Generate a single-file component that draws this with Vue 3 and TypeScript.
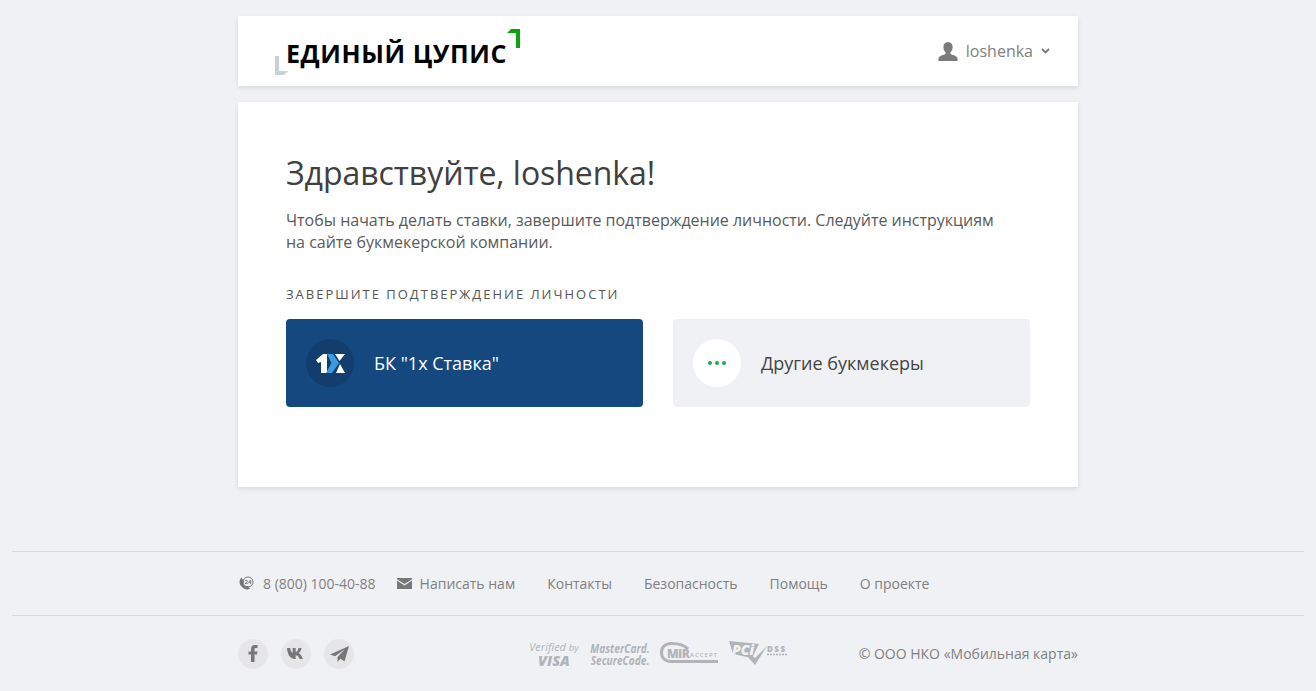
<template>
  <div class="page">
    <header class="topbar wrap">
      <a class="logo">
        <svg class="logo-corner grey" width="14" height="19" viewBox="0 0 14 19"><path d="M0 0h4v15h9l-4 4H0z" fill="#c5d2d6" /></svg>
        <span class="logo-text">ЕДИНЫЙ ЦУПИС</span>
        <svg class="logo-corner green" width="13" height="19" viewBox="0 0 13 19"><path d="M4 0h9v19H9V4H0z" fill="#0ca30c" /></svg>
      </a>
      <div class="user">
        <svg width="20" height="19" viewBox="0 0 20 19"><path d="M10 0c3 0 4.600 2.200 4.600 5 0 2.300-.9 4.300-2.100 5.300v1.700c1.500.8 6.500 1.900 7 4.200.1.800.1 1.800.1 2.800H.4c0-1 0-2 .1-2.800.5-2.300 5.500-3.400 7-4.200v-1.700C6.300 9.300 5.400 7.300 5.400 5 5.400 2.200 7 0 10 0z" fill="#7b7b7b" /></svg>
        <span>loshenka</span>
        <svg width="9" height="6" viewBox="0 0 9 6"><path d="M1 1l3.500 3.500L8 1" fill="none" stroke="#777" stroke-width="1.800" /></svg>
      </div>
    </header>

    <main class="card wrap">
      <h1>Здравствуйте, loshenka!</h1>
      <p>Чтобы начать делать ставки, завершите подтверждение личности. Следуйте инструкциям<br />на сайте букмекерской компании.</p>
      <div class="label">Завершите подтверждение личности</div>
      <div class="choices">
        <a class="choice blue">
          <span class="disc navy">
            <svg class="onex" width="29" height="19" viewBox="0 0 29 19">
              <path d="M0 6l7-6h4v19H5V8L2 9z" fill="#fff" />
              <path d="M19 0h10l-5.500 7z" fill="#fff" />
              <path d="M24 10l5 9h-9z" fill="#fff" />
              <path d="M11 0h6l6 9-7 10h-6l5.500-10z" fill="#3a9be0" />
            </svg>
          </span>
          <span>БК "1х Ставка"</span>
        </a>
        <a class="choice grey">
          <span class="disc white">
            <i></i><i></i><i></i>
          </span>
          <span>Другие букмекеры</span>
        </a>
      </div>
    </main>

    <footer class="footer">
      <div class="footer-row links">
        <div class="wrap link-list">
          <a class="with-icon">
            <svg width="16" height="15" viewBox="0 0 16 15">
              <path d="M3.500 1.500C1 4 .8 7.500 3.500 10.500s6 4 8.500 2l-2.200-2.600-1.500.9C7 10.300 5.400 8.500 5 7l1.200-1.300z" fill="#777" />
              <circle cx="10" cy="6" r="5" fill="none" stroke="#777" stroke-width="1" />
              <text x="10" y="8" class="tiny">24</text>
            </svg>
            8 (800) 100-40-88
          </a>
          <a class="with-icon mail">
            <svg width="15" height="11" viewBox="0 0 15 11">
              <path d="M0 1.200V0h15v1.200L7.500 6z" fill="#777" />
              <path d="M0 2.600L7.500 7.400 15 2.600V11H0z" fill="#777" />
            </svg>
            Написать нам
          </a>
          <a>Контакты</a>
          <a>Безопасность</a>
          <a>Помощь</a>
          <a>О проекте</a>
        </div>
      </div>
      <div class="footer-row bottom">
        <div class="wrap bottom-inner">
          <div class="socials">
            <span class="social">
              <svg width="10" height="17" viewBox="0 0 10 17"><path d="M3 17V9.500H.5v-3H3V4.300C3 1.500 4.700 0 7 0h2.500v3H8C6.800 3 6.500 3.500 6.500 4.500v2h3l-.5 3H6.500V17z" fill="#777" /></svg>
            </span>
            <span class="social">
              <svg width="18" height="11" viewBox="0 0 18 11"><path d="M0 0h3.200c.3 2.500 1.300 4.500 2.500 5V0h3v4.300c1.200-.3 2.300-2 2.900-4.300h3c-.5 2.500-1.800 4.200-3 5 1.400.7 3.100 2.500 4.400 6h-3.300c-.8-2.200-2.300-3.500-4-3.700V11H8C3.500 11 .5 7 0 0z" fill="#777" /></svg>
            </span>
            <span class="social">
              <svg width="19" height="16" viewBox="0 0 19 16"><path d="M19 0L0 8.500l5 1.700L15 3 7.500 11v5l3-3.300 4 2.800z" fill="#777" /></svg>
            </span>
          </div>
          <div class="badges">
            <div class="badge visa"><em>Verified <small>by</small></em><b>VISA</b></div>
            <div class="badge mc"><em>MasterCard. SecureCode.</em></div>
            <svg class="badge-svg" width="60" height="24" viewBox="0 0 60 24">
              <path d="M28 7C24 2.500 18 1.500 11.500 1.500 5 1.500 1.500 5.500 1.500 10.500S5 19.500 11.500 19.500H58" fill="none" stroke="#b0b3b8" stroke-width="3" />
              <text x="7" y="16" class="mir-text">MIR</text>
              <text x="30" y="15" class="accept-text">ACCEPT</text>
            </svg>
            <svg class="badge-svg pci" width="60" height="25" viewBox="0 0 60 25">
              <path d="M1 0l30 3-7 14-19-4z" fill="#b0b3b8" />
              <path d="M19 15l8 9L39 5 27 17l-4-3z" fill="#b0b3b8" />
              <text x="4" y="14" class="pci-text">PCi</text>
              <text x="39" y="11" class="dss-text">DSS</text>
              <path d="M39 13.500h20" stroke="#b0b3b8" stroke-width="1.500" stroke-dasharray="2 1" />
            </svg>
          </div>
          <div class="copy">© ООО НКО «Мобильная карта»</div>
        </div>
      </div>
    </footer>
  </div>
</template>

<script setup lang="ts">
</script>

<style>
html,
body {
  margin: 0;
  background: #f0f1f5;
}
</style>

<style scoped>
.page {
  min-height: 691px;
  padding-top: 16px;
  box-sizing: border-box;
  font-family: "Open Sans", "Noto Sans", sans-serif;
  color: #333;
}

.wrap {
  width: 840px;
  margin: 0 auto;
  box-sizing: border-box;
}

.topbar {
  height: 70px;
  background: #fff;
  box-shadow: 0 2px 5px rgba(0, 0, 0, 0.1);
  display: flex;
  align-items: center;
  justify-content: space-between;
  padding: 0 28px 0 37px;
}

.logo {
  display: flex;
  position: relative;
  align-items: center;
  padding-left: 11px;
}

.logo-text {
  font-size: 25px;
  font-weight: 700;
  line-height: 34px;
  color: #000;
  letter-spacing: 0.6px;
  margin-top: 3px;
}

.logo-corner {
  position: absolute;
}

.logo-corner.grey {
  left: 0;
  top: 23px;
}

.logo-corner.green {
  right: -13px;
  top: -4px;
}

.user {
  display: flex;
  align-items: center;
  gap: 8px;
  font-size: 16px;
  color: #808080;
}

.card {
  margin-top: 16px;
  height: 385px;
  background: #fff;
  box-shadow: 0 2px 5px rgba(0, 0, 0, 0.1);
  padding: 48px;
}

h1 {
  margin: 0;
  padding-top: 1px;
  font-size: 32px;
  font-weight: 400;
  line-height: 44px;
  letter-spacing: -0.05px;
  color: #404040;
}

p {
  margin: 14px 0 0;
  font-size: 16px;
  line-height: 22px;
  letter-spacing: -0.012px;
  color: #5a5a5a;
}

.label {
  margin-top: 32px;
  font-size: 13px;
  line-height: 18px;
  letter-spacing: 2px;
  text-transform: uppercase;
  color: #555;
}

.choices {
  display: flex;
  gap: 30px;
  margin-top: 16px;
}

.choice {
  width: 357px;
  height: 88px;
  border-radius: 4px;
  display: flex;
  align-items: center;
  gap: 20px;
  padding: 0 20px;
  box-sizing: border-box;
  font-size: 18px;
}

.choice.blue {
  background: #15487f;
  color: #fff;
}

.choice.grey {
  background: #f0f1f5;
  color: #444;
}

.disc {
  width: 48px;
  height: 48px;
  border-radius: 50%;
  display: flex;
  align-items: center;
  justify-content: center;
  flex: none;
  gap: 3px;
}

.disc.navy {
  background: #123d6d;
}

.disc.white {
  background: #fff;
}

.disc i {
  width: 4px;
  height: 4px;
  border-radius: 50%;
  background: #22a84a;
}

.footer {
  margin-top: 64px;
}

.footer-row {
  margin: 0 12px;
  border-top: 1px solid #d9dadd;
}

.links {
  height: 63px;
}

.link-list {
  display: flex;
  align-items: center;
  height: 100%;
  gap: 32px;
  font-size: 14px;
  color: #808080;
}

.with-icon {
  display: flex;
  align-items: center;
  gap: 9px;
}

.mail {
  margin-left: -11px;
  gap: 8px;
}

.tiny {
  font-size: 6px;
  font-weight: 700;
  text-anchor: middle;
  fill: #777;
}

.bottom-inner {
  display: flex;
  align-items: center;
  height: 75px;
}

.socials {
  display: flex;
  gap: 13px;
}

.social {
  width: 30px;
  height: 30px;
  border-radius: 50%;
  background: #e6e6e8;
  display: flex;
  align-items: center;
  justify-content: center;
}

.badges {
  display: flex;
  align-items: center;
  margin-left: 174px;
  gap: 10px;
  color: #b0b3b8;
}

.badge {
  display: flex;
  flex-direction: column;
  align-items: center;
  width: 52px;
  white-space: nowrap;
}

.visa em {
  font-size: 11px;
  line-height: 12px;
}

.visa small {
  font-size: 9.500px;
}

.visa b {
  font-size: 14.500px;
  line-height: 13px;
  font-weight: 800;
  font-style: italic;
}

.mc {
  width: 60px;
}

.mc em {
  width: 80px;
  flex: none;
  white-space: normal;
  text-align: center;
  font-size: 13px;
  line-height: 12px;
  font-weight: 700;
  transform: scaleX(0.78);
}

.badge-svg {
  overflow: visible;
}

.badge-svg.pci {
  margin-left: -2px;
}

.mir-text {
  font-size: 12px;
  font-weight: 800;
  letter-spacing: -0.5px;
  fill: #b0b3b8;
}

.accept-text {
  font-size: 6px;
  font-weight: 600;
  letter-spacing: 1px;
  fill: #b0b3b8;
}

.pci-text {
  font-size: 14px;
  font-weight: 800;
  font-style: italic;
  fill: #f0f1f5;
}

.dss-text {
  font-size: 8px;
  font-weight: 800;
  letter-spacing: 1.500px;
  fill: #b0b3b8;
}

.copy {
  margin-left: auto;
  font-size: 14px;
  color: #808080;
}
</style>
